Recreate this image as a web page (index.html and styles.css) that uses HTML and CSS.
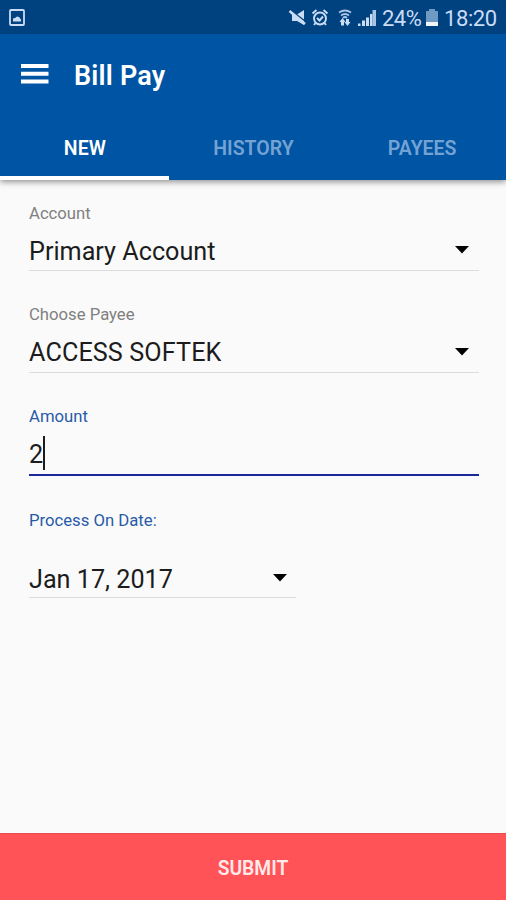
FILE: index.html
```html
<!DOCTYPE html>
<html lang="en">
<head>
<meta charset="utf-8">
<title>Bill Pay</title>
<link rel="stylesheet" href="styles.css">
</head>
<body>
<div class="app">
  <header class="header">
    <div class="status">
      <svg class="status-picture" width="16" height="17" viewBox="0 0 16 17"><rect x="1" y="1" width="14" height="15" rx="1" fill="none" stroke="#cbdcf5" stroke-width="1.8"/><path d="M4 12.500V9.500l2-.5 2-1.500 2 .5 2 2.500v2z" fill="#cbdcf5"/></svg>
      <svg class="status-icons" width="90" height="20" viewBox="0 0 90 20" fill="#cbdcf5">
        <path d="M4 6.500h5L16 2v15l-7-4H4z"/>
        <path d="M1 1l16 12" fill="none" stroke="#00427f" stroke-width="1.500"/>
        <path d="M1.500 3l15.500 13" fill="none" stroke="#cbdcf5" stroke-width="2.600"/>
        <g fill="none" stroke="#cbdcf5" stroke-width="1.900"><circle cx="32" cy="10.500" r="6"/><path d="M29 10l2.500 2.500L35 8.500M24.500 5.500l4-3.500M35.500 2l4 3.500M27.500 15l-1.500 2M36.500 15l1.500 2"/></g>
        <g fill="none" stroke="#a9c4e4" stroke-width="1.800"><path d="M51 4.500q6-4 12 0M53 7.500q4-3 8 0M55 10q2-2 4 0"/></g>
        <path d="M54.500 10l-3 4h1.500v3.500h3V14h1.500zM59.500 18l3-4H61v-3h-3v3h-1.500z"/>
        <path d="M70 15.500h2.500V18H70zM74 12.500h3V18h-3zM78 9.500h3V18h-3zM82 6h2.500v12H82z"/><path d="M84.500 2H88v16h-3.500z" fill="#a9c4e4"/>
      </svg>
      <span class="status-percent">24%</span>
      <svg class="status-battery" width="12" height="18" viewBox="0 0 12 18"><path d="M3 0h6v2h3v11H0V2h3z" fill="#6f9ac4"/><path d="M0 13h12v4H0z" fill="#f2f6fc"/></svg>
      <span class="status-time">18:20</span>
    </div>
    <div class="toolbar">
      <svg class="menu" width="28" height="20" viewBox="0 0 28 20" fill="#fff"><path d="M0 0h27.500v4H0zM0 7.700h27.500v4H0zM0 15.400h27.500v4H0z"/></svg>
      <h1 class="title"><span>Bill Pay</span></h1>
    </div>
    <nav class="tabs">
      <div class="tab tab-active"><span>NEW</span></div>
      <div class="tab"><span>HISTORY</span></div>
      <div class="tab"><span>PAYEES</span></div>
    </nav>
  </header>
  <main class="form">
    <div class="field">
      <div class="label"><span>Account</span></div>
      <div class="value"><span>Primary Account</span><svg class="arrow" width="14" height="8" viewBox="0 0 14 8"><path d="M0 0h14L7 7.500z"/></svg></div>
    </div>
    <div class="field field-payee">
      <div class="label"><span>Choose Payee</span></div>
      <div class="value"><span>ACCESS SOFTEK</span><svg class="arrow" width="14" height="8" viewBox="0 0 14 8"><path d="M0 0h14L7 7.500z"/></svg></div>
    </div>
    <div class="field field-focus">
      <div class="label"><span>Amount</span></div>
      <div class="value"><span>2</span><i class="caret"></i></div>
    </div>
    <div class="field field-date">
      <div class="label"><span>Process On Date:</span></div>
      <div class="value"><span>Jan 17, 2017</span><svg class="arrow" width="14" height="8" viewBox="0 0 14 8"><path d="M0 0h14L7 7.500z"/></svg></div>
    </div>
  </main>
  <div class="submit"><span>SUBMIT</span></div>
</div>
</body>
</html>
```
FILE: styles.css
```css
* { box-sizing: border-box; }
body { margin: 0; background: #fafafa; font-family: Roboto, "Liberation Sans", sans-serif; }
.app { width: 506px; height: 900px; display: flex; flex-direction: column; overflow: hidden; }
.header { height: 180px; background: #0054a4; box-shadow: 0 2px 6px rgba(0, 0, 0, .42); color: #fff; }
.status { height: 34px; background: #00427f; display: flex; align-items: center; padding: 1px 9px 0; color: #cbdcf5; font-size: 22px; line-height: 32px; }
.status-icons { margin-left: auto; margin-right: 4px; }
.status-percent { width: 39px; margin-top: 2px; letter-spacing: -.5px; white-space: nowrap; }
.status-battery { margin: 0 6px 0 5px; }
.status-time { width: 53px; margin-top: 2px; letter-spacing: -.4px; white-space: nowrap; }
.toolbar { height: 80px; display: flex; align-items: center; padding-left: 20.500px; }
.menu { margin-top: -1px; margin-right: 25.500px; }
.title { margin: 3px 0 0; font-size: 27px; line-height: 32px; font-weight: 600; letter-spacing: .2px; }
.tabs { height: 66px; display: grid; grid-template-columns: repeat(3, 1fr); }
.tab { height: 66px; display: flex; justify-content: center; padding: 19px 0 0 1px; font-size: 19.500px; line-height: 32px; font-weight: 600; color: #74a3d3; }
.tab-active { color: #fff; border-bottom: 4px solid #fff; }
.form { flex: 1; padding: 21px 27.500px 0 29px; }
.field { height: 101.500px; }
.label { height: 24px; font-size: 16.700px; line-height: 26px; color: #808080; }
.field-payee .label { line-height: 24px; }
.field-payee .value { letter-spacing: .1px; }
.value { height: 46px; display: flex; align-items: center; border-bottom: 1.500px solid #dcdcdc; font-size: 25.200px; line-height: 36px; padding: 8.500px 10px 0 0; color: #1c1c1c; }
.arrow { margin-left: auto; margin-top: -3px; fill: #000; }
.field-focus { height: 104px; }
.field-focus .label, .field-date .label { color: #285aa8; }
.field-focus .value { height: 47.500px; border-bottom: 2.500px solid #1b2699; }
.caret { width: 2px; height: 34px; margin-top: -5px; background: #1c1c1c; }
.field-date { width: 267px; }
.field-date .value { margin-top: 20px; padding-top: 10px; }
.field-date .arrow { margin-right: -1px; }
.submit { height: 67px; background: #ff5357; border-top: 1px solid #ec4c50; display: flex; align-items: center; justify-content: center; font-size: 19.300px; font-weight: 600; color: #ffe9e9; padding-top: 2px; }
```
